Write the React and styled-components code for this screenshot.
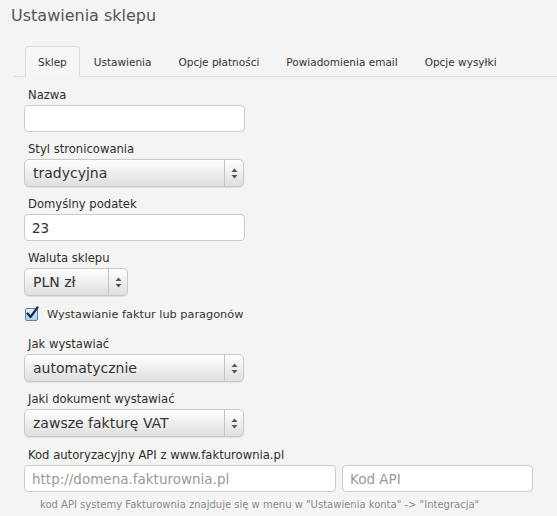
import React from 'react';
import styled, { createGlobalStyle } from 'styled-components';

const GlobalStyle = createGlobalStyle`
  html, body {
    margin: 0;
    padding: 0;
    background: #f4f4f4;
  }

  body {
    font-family: "DejaVu Sans", Verdana, sans-serif;
    color: #333;
  }
`;

const Page = styled.div`
  width: 557px;
  height: 516px;
  overflow: hidden;
  padding-top: 5px;
  box-sizing: border-box;
`;

const Title = styled.h1`
  font-size: 16px;
  font-weight: normal;
  color: #555;
  margin: 0 0 0 11px;
  line-height: 22px;
`;

const Tabs = styled.ul`
  list-style: none;
  margin: 19px 0 0 14px;
  padding: 0 0 0 11px;
  display: flex;
  border-bottom: 1px solid #ddd;
  height: 30px;
`;

const Tab = styled.li`
  height: 31px;
  box-sizing: border-box;
  padding: 0 12px;
  margin-right: 1px;
  margin-bottom: -1px;
  display: flex;
  align-items: center;
  font-size: 10.5px;
  color: #333;
  border: 1px solid ${p => (p.$active ? '#ddd' : 'transparent')};
  border-bottom-color: ${p => (p.$active ? '#f4f4f4' : 'transparent')};
  border-radius: 4px 4px 0 0;
  background: ${p => (p.$active ? '#f6f6f6' : 'transparent')};
`;

const Form = styled.div`
  padding: 10px 0 0 24px;
`;

const Field = styled.div`
  margin-bottom: ${p => p.$gap ?? 9}px;
`;

const Label = styled.div`
  font-size: 11.6px;
  line-height: 16px;
  padding-left: 4px;
  margin-bottom: 2px;
  color: #2e2e2e;
`;

const Input = styled.input`
  display: block;
  box-sizing: border-box;
  width: ${p => p.$width || 221}px;
  height: 27px;
  border: 1px solid #ccc;
  border-radius: 4px;
  background: #fff;
  padding: 0 7px;
  font-family: "DejaVu Sans", Verdana, sans-serif;
  font-size: 13.5px;
  color: #333;
  outline: none;

  &::placeholder {
    color: #999;
  }
`;

const Row = styled.div`
  display: flex;
  gap: 6px;
`;

const SelectBox = styled.div`
  box-sizing: border-box;
  width: ${p => p.$width || 220}px;
  height: 28px;
  border: 1px solid #c8c8c8;
  border-radius: 5px;
  background: linear-gradient(#ffffff, #f0f0f0 45%, #dfdfdf);
  box-shadow: inset 0 1px 0 #fff, 0 1px 1px rgba(0, 0, 0, 0.08);
  display: flex;
  align-items: stretch;
`;

const SelectValue = styled.div`
  flex: 1;
  display: flex;
  align-items: center;
  padding-left: 8px;
  font-size: 14px;
  color: #333;
`;

const SelectArrows = styled.div`
  width: 18px;
  border-left: 1px solid #c4c4c4;
  display: flex;
  align-items: center;
  justify-content: center;
`;

const CheckRow = styled.label`
  display: flex;
  align-items: center;
  gap: 9px;
  height: 16px;
  margin: 0 0 14px 1px;
  font-size: 11.3px;
  color: #333;
`;

const Box = styled.span`
  width: 13px;
  height: 13px;
  box-sizing: border-box;
  border: 1px solid #5a7fb0;
  border-radius: 2px;
  background: linear-gradient(#e4eefb, #b8cdea);
  position: relative;
`;

const Help = styled.div`
  font-size: 10px;
  color: #8a8a8a;
  margin: 7px 0 0 16px;
`;

function Arrows() {
  return (
    <svg width="7" height="11" viewBox="0 0 7 11">
      <path d="M3.5 0.5 L6.5 4 L0.5 4 Z" fill="#555" />
      <path d="M3.5 10.5 L6.5 7 L0.5 7 Z" fill="#555" />
    </svg>
  );
}

function Select({ value, width }) {
  return (
    <SelectBox $width={width}>
      <SelectValue>{value}</SelectValue>
      <SelectArrows>
        <Arrows />
      </SelectArrows>
    </SelectBox>
  );
}

function Checkbox() {
  return (
    <Box>
      <svg width="15" height="14" viewBox="0 0 15 14" style={{ position: 'absolute', left: -1, top: -3 }}>
        <path d="M2.5 7.5 L5.5 11 L12.5 1.5" stroke="#1c2c4a" strokeWidth="2.2" fill="none" strokeLinecap="round" strokeLinejoin="round" />
      </svg>
    </Box>
  );
}

const tabs = ['Sklep', 'Ustawienia', 'Opcje płatności', 'Powiadomienia email', 'Opcje wysyłki'];

export default function App() {
  return (
    <Page>
      <GlobalStyle />
      <Title>Ustawienia sklepu</Title>

      <Tabs>
        {tabs.map((t, i) => (
          <Tab key={t} $active={i === 0}>{t}</Tab>
        ))}
      </Tabs>

      <Form>
        <Field>
          <Label>Nazwa</Label>
          <Input />
        </Field>

        <Field>
          <Label>Styl stronicowania</Label>
          <Select value="tradycyjna" />
        </Field>

        <Field>
          <Label>Domyślny podatek</Label>
          <Input defaultValue="23" />
        </Field>

        <Field $gap={10}>
          <Label>Waluta sklepu</Label>
          <Select value="PLN zł" width={104} />
        </Field>

        <CheckRow>
          <Checkbox />
          Wystawianie faktur lub paragonów
        </CheckRow>

        <Field>
          <Label>Jak wystawiać</Label>
          <Select value="automatycznie" />
        </Field>

        <Field $gap={10}>
          <Label>Jaki dokument wystawiać</Label>
          <Select value="zawsze fakturę VAT" />
        </Field>

        <Field $gap={0}>
          <Label>Kod autoryzacyjny API z www.fakturownia.pl</Label>
          <Row>
            <Input $width={312} placeholder="http://domena.fakturownia.pl" />
            <Input $width={191} placeholder="Kod API" />
          </Row>
        </Field>

        <Help>kod API systemy Fakturownia znajduje się w menu w "Ustawienia konta" -&gt; "Integracja"</Help>
      </Form>
    </Page>
  );
}
